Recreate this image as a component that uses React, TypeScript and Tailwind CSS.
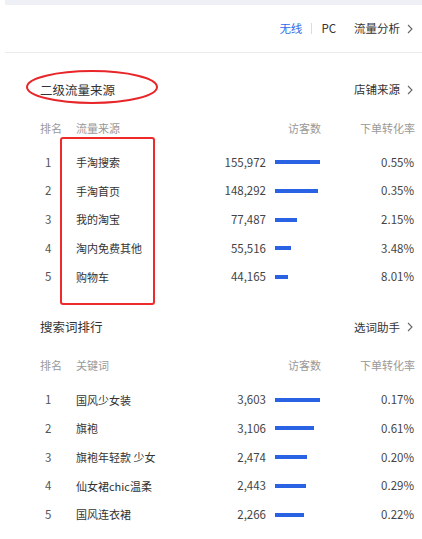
import React from "react";

type Row = { rank: number; name: string; visitors: string; bar: number; rate: string };

const sources: Row[] = [
  { rank: 1, name: "手淘搜索", visitors: "155,972", bar: 45, rate: "0.55%" },
  { rank: 2, name: "手淘首页", visitors: "148,292", bar: 43, rate: "0.35%" },
  { rank: 3, name: "我的淘宝", visitors: "77,487", bar: 22, rate: "2.15%" },
  { rank: 4, name: "淘内免费其他", visitors: "55,516", bar: 16, rate: "3.48%" },
  { rank: 5, name: "购物车", visitors: "44,165", bar: 13, rate: "8.01%" },
];

const keywords: Row[] = [
  { rank: 1, name: "国风少女装", visitors: "3,603", bar: 45, rate: "0.17%" },
  { rank: 2, name: "旗袍", visitors: "3,106", bar: 39, rate: "0.61%" },
  { rank: 3, name: "旗袍年轻款 少女", visitors: "2,474", bar: 32, rate: "0.20%" },
  { rank: 4, name: "仙女裙chic温柔", visitors: "2,443", bar: 31, rate: "0.29%" },
  { rank: 5, name: "国风连衣裙", visitors: "2,266", bar: 29, rate: "0.22%" },
];

function Chevron() {
  return (
    <svg width="6" height="10" viewBox="0 0 6 10" className="ml-[7px]">
      <path d="M1 1l4 4-4 4" fill="none" stroke="#666" strokeWidth="1.1" />
    </svg>
  );
}

function LinkText({ label }: { label: string }) {
  return (
    <div className="flex items-center text-[11.5px] text-[#333]">
      {label}
      <Chevron />
    </div>
  );
}

function Section({ title, link, col, rows }: { title: string; link: string; col: string; rows: Row[] }) {
  return (
    <div>
      <div className="flex h-7 items-center justify-between pl-[40px] pr-[9px]">
        <span className="text-[12.5px] text-[#333]">{title}</span>
        <LinkText label={link} />
      </div>
      <div className="mt-[10px] flex h-7 items-center pl-[40px] pr-[7px] text-[11px] text-[#999]">
        <span className="w-[36px]">排名</span>
        <span className="flex-1">{col}</span>
        <span>访客数</span>
        <span className="w-[94px] text-right">下单转化率</span>
      </div>
      <div className="mt-[6px]">
        {rows.map((r) => (
          <div key={r.rank} className="flex h-[28.7px] items-center pl-[40px] pr-[8px] text-[11px] text-[#333]">
            <span className="w-[36px] pl-[5px] text-[11.5px] text-[#555]">{r.rank}</span>
            <span className="flex-1">{r.name}</span>
            <span className="text-[11.5px] text-[#444]">{r.visitors}</span>
            <div className="ml-[9px] w-[45px]">
              <div className="h-[4px] bg-[#2a62e4]" style={{ width: r.bar }} />
            </div>
            <span className="w-[94px] text-right text-[11.5px] text-[#444]">{r.rate}</span>
          </div>
        ))}
      </div>
    </div>
  );
}

export default function App() {
  return (
    <div
      className="relative h-[539px] w-[422px] overflow-hidden bg-white"
      style={{ fontFamily: '"Noto Sans CJK SC", "Noto Sans", sans-serif' }}
    >
      <div className="ml-[5px] h-[5px] bg-[#eef0f5]" />
      <div className="ml-[5px] flex h-[48px] items-center justify-end border-b border-[#ebebeb] pr-[9px] text-[11.5px]">
        <span className="text-[#2e6be6]">无线</span>
        <span className="mx-[9px] h-[11px] w-px bg-[#ddd]" />
        <span className="text-[#333]">PC</span>
        <span className="ml-[18px]">
          <LinkText label="流量分析" />
        </span>
      </div>

      <div className="pt-[23px]">
        <Section title="二级流量来源" link="店铺来源" col="流量来源" rows={sources} />
      </div>
      <div className="mt-[22px]">
        <Section title="搜索词排行" link="选词助手" col="关键词" rows={keywords} />
      </div>

      {/* red annotations drawn over the screenshot */}
      <svg className="pointer-events-none absolute left-[25px] top-[69px]" width="134" height="36">
        <ellipse cx="67" cy="18" rx="65" ry="16" fill="none" stroke="#e8262a" strokeWidth="2" />
      </svg>
      <div className="pointer-events-none absolute left-[60px] top-[137px] h-[168px] w-[95px] rounded-[3px] border-2 border-[#ee2a2a]" />
    </div>
  );
}
